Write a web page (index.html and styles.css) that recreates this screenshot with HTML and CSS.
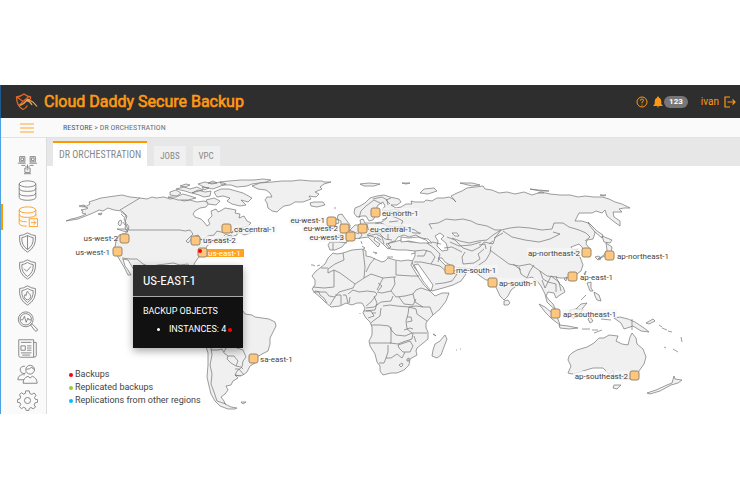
FILE: index.html
```html
<!DOCTYPE html>
<html lang="en">
<head>
<meta charset="utf-8">
<title>Cloud Daddy Secure Backup</title>
<link rel="stylesheet" href="styles.css">
</head>
<body>
<div class="app">
  <header class="topbar">
    <svg class="logo" viewBox="0 0 24 20" aria-hidden="true"><path d="M15.500 7V4.800Q12 4.500 9 2Q6 4.500 1.500 4.800Q1.500 14 8 17.500Q10.500 16.500 12.500 13.500M2 5L8 9.500L14 4.500M4 13.500L8 9.500"/><path class="swoosh" d="M5 13.500Q9 12 11.500 8.500Q13 6.500 15.500 8.500Q19 10 22 14.500M11.500 8.500Q15 9 17 13"/></svg>
    <h1 class="brand">Cloud Daddy Secure Backup</h1>
    <button class="icon-button" aria-label="Help"><svg class="help" viewBox="0 0 12 12"><circle cx="6" cy="6" r="5"/><path d="M4.300 4.700Q4.500 3 6 3Q7.800 3.200 7.500 4.800Q7.300 5.500 6 6.200V7.300M6 8.500V9.500"/></svg></button>
    <button class="alerts" aria-label="Notifications"><svg class="bell" viewBox="0 0 12 12"><path d="M6 0.500Q7 .5 7 1.800Q9.300 2.500 9.300 5.500V8L10.800 9.700V10H1.200V9.700L2.700 8V5.500Q2.700 2.500 5 1.800Q5 .5 6 .5M4.800 10.500H7.200Q6 12.500 4.800 10.500"/></svg><span class="count">123</span></button>
    <a class="user" href="#">ivan <svg class="exit" viewBox="0 0 12 12"><path d="M6 1H1V11H6M3.500 6H11M8.500 3.500L11 6L8.500 8.500"/></svg></a>
  </header>

  <div class="crumbs">
    <button class="menu" aria-label="Menu"><svg viewBox="0 0 14 10"><path d="M0 1.500H14M0 5.500H14M0 9.500H14"/></svg></button>
    <nav class="trail"><a href="#">RESTORE</a> &gt; DR ORCHESTRATION</nav>
  </div>

  <div class="workspace">
    <nav class="sidebar">
      <a href="#" aria-label="Network"><svg viewBox="0 0 24 24"><path d="M3 3H9V9H3ZM4.500 4.500H7.500V7.500H4.500ZM1 10.500H10M15 3H21V9H15ZM16.500 4.500H19.500V7.500H16.500ZM14 10.500H23M5 13H9L11 15M19 13H15L13 15M9 16H15V21H9ZM11 18H13M8 22.500H16M12 12V16"/></svg></a>
      <a href="#" aria-label="Storage"><svg viewBox="0 0 24 24"><ellipse cx="12" cy="4.500" rx="9.500" ry="3.500"/><path d="M2.500 4.500V20Q3 23 12 23.200Q21 23 21.500 20V4.500M2.500 9.500Q3 13 12 13Q21 13 21.500 9.500M2.500 15Q3 18.200 12 18.200Q21 18.200 21.500 15"/></svg></a>
      <a class="current" href="#" aria-label="Restore"><svg viewBox="0 0 24 24"><ellipse cx="12" cy="4.500" rx="9.500" ry="3.500"/><path d="M2.500 4.500V20Q3 23 11 23M21.500 4.500V12M2.500 9.500Q3 13 12 13Q21 13 21.500 9.500M2.500 15Q3 18 11 18M14 14.500H23.500V23.500H14ZM16 19H21.500M19 16.500L21.500 19L19 21.500"/></svg></a>
      <a href="#" aria-label="Protection"><svg viewBox="0 0 24 24"><path d="M12 1Q7 4 3 4Q1.500 17 12 23Q22.500 17 21 4Q17 4 12 1ZM12 4Q8.500 6 5.500 6.500Q5 15.500 12 20Q19 15.500 18.500 6.500Q15.500 6 12 4ZM12 4V20"/></svg></a>
      <a href="#" aria-label="Compliance"><svg viewBox="0 0 24 24"><path d="M12 1Q7 4 3 4Q1.500 17 12 23Q22.500 17 21 4Q17 4 12 1ZM12 4Q8.500 6 5.500 6.500Q5 15.500 12 20Q19 15.500 18.500 6.500Q15.500 6 12 4ZM8 11L11 14L16 8.500"/></svg></a>
      <a href="#" aria-label="Firewall"><svg viewBox="0 0 24 24"><path d="M12 1Q7 4 3 4Q1.500 17 12 23Q22.500 17 21 4Q17 4 12 1ZM12 4Q8.500 6 5.500 6.500Q5 15.500 12 20Q19 15.500 18.500 6.500Q15.500 6 12 4ZM12 7Q12.500 9 15 11Q17 15.500 12 17Q7 15.500 9 11L10.500 12Q10.500 9 12 7"/></svg></a>
      <a href="#" aria-label="Monitoring"><svg viewBox="0 0 24 24"><circle cx="10" cy="9.500" r="8.500"/><circle cx="10" cy="9.500" r="6.500"/><path d="M4 10H6.500L8.500 6L10.500 13L12.500 8L13.500 10H16M15.500 16L17 14.500L23 20.500Q24 22 22.500 23Q21.500 23.500 20.500 22.500Z"/></svg></a>
      <a href="#" aria-label="Reports"><svg viewBox="0 0 24 24"><path d="M2 2H19V22H4Q2 22 2 20ZM19 5H22V20Q22 22 19 22M4.500 5H16.500M4.500 9H9.500V14H4.500ZM11.500 9H16.500M11.500 11.500H16.500M11.500 14H16.500M4.500 17H16.500M6 19.500H15"/></svg></a>
      <a href="#" aria-label="Users"><svg viewBox="0 0 24 24"><circle cx="15" cy="6.500" r="5"/><path d="M10.500 6Q15 6 17 3.500Q17.500 6 20 6M7 22Q7 16 12.500 14L15 16L17.500 14Q23 16 23 22ZM9 2.500Q4 2 3.500 7Q4.500 11 8 11L10 10M8 11V13M6.500 12Q1 13 1 18H8"/></svg></a>
      <a href="#" aria-label="Settings"><svg viewBox="0 0 24 24"><circle cx="12" cy="12" r="3.500"/><path d="M10 1H14L14.700 4L17 5L19.600 3.400L21.800 6L20 8.700L20.800 10.500L23.500 11V14L20.500 14.800L19.600 17L21.200 19.500L18.500 21.500L16 20L14 21L13.500 23.500H10.500L9.700 20.700L7.500 19.800L5 21.300L2.800 19L4.300 16.500L3.400 14.500L.5 14V11L3.400 10L4.300 8L2.800 5.500L5 3.200L7.500 4.700L9.500 4Z"/></svg></a>
    </nav>

    <main class="content">
      <nav class="tabs">
        <a class="tab active" href="#">DR ORCHESTRATION</a>
        <a class="tab" href="#">JOBS</a>
        <a class="tab" href="#">VPC</a>
      </nav>
      <section class="map">
        <svg class="world" viewBox="47 166 693 248" role="img" aria-label="Regions">
          <g class="land">
            <!-- North America -->
            <path d="M66 221L71 219L76 218L82 216L86 214L82 213L83 211L81 210L86 209L88 208L85 207L82 206L87 206L90 204L89 202L95 200L101 198L108 197L115 196L122 195L130 197L140 198L147 199L152 197L156 198L164 197L170 199L176 198L184 201L190 200L197 202L204 201L209 203L206 207L200 208L195 211L193 214L195 217L201 219L204 222L207 226L210 224L208 220L212 216L211 211L216 209L218 212L222 210L225 208L231 209L236 210L235 213L240 214L239 218L244 216L247 221L251 223L248 226L243 227L235 229L231 233L238 231L237 235L231 237L226 234L222 238L216 239L211 243L207 246L205 250L203 254L198 258L194 264L196 271L192 270L188 264L180 265L173 263L166 264L157 265L151 269L149 276L151 283L158 286L167 287L170 282L178 281L176 290L184 293L187 302L196 307L191 310L183 305L173 295L162 294L147 287L140 278L134 270L128 260L123 259L125 266L128 270L131 275L128 275L124 267L121 262L118 257L115 252L115 247L116 241L119 235L124 234L128 231L125 228L126 223L124 219L126 215L122 211L114 210L108 208L103 211L99 210L93 213L88 215L78 219Z"/>
            <path d="M119 221l2 -1 1 3 -2 3 -2 -2zM83 207l-4 -1 5 -1 1 1zM98 214l4 -1 -1 2zM117 229l8 0 3 3 -5 -1zM236 233l5 -5 6 2 4 3 -7 2 -3 -2zM225 237l6 -2 1 2 -7 2z"/>
            <path d="M170 192L176 190L181 193L177 196L170 195ZM168 197L176 197L183 194L190 196L196 198L188 200L178 200ZM176 189L184 187L190 189L197 187L203 190L195 192L191 193L185 191ZM192 193L198 190L205 192L211 191L210 196L204 197L199 195ZM198 184L205 182L212 184L220 182L226 184L218 187L213 189L204 187ZM220 182L229 181L241 180L254 180L263 179L271 180L266 182L252 184L247 186L237 187L231 185L222 185ZM214 192L221 189L229 189L236 191L243 193L252 198L248 202L241 200L246 205L240 206L232 204L227 201L230 198L223 196L217 197ZM206 200L214 198L220 201L216 205L208 204ZM180 186l6 -2 4 1 -5 2zM202 187l7 1 -5 2zM208 183l5 -2 4 2z"/>
            <!-- Greenland and Iceland -->
            <path d="M252 186L260 183L272 182L282 181L292 181L300 180L311 181L322 181L324 182L331 182L324 184L320 187L322 189L315 192L319 194L316 197L309 196L311 199L303 202L295 202L290 205L284 206L280 209L277 212L272 211L268 208L267 203L265 200L267 197L272 197L270 193L266 190L258 189ZM310 203L314 202L323 202L325 205L317 207L311 206Z"/>
            <!-- South America -->
            <path d="M193 309L203 305L215 307L225 307L235 309L243 311L245 314L252 315L255 317L262 318L269 319L275 322L276 326L273 332L270 338L270 344L268 351L262 354L257 357L255 363L250 366L247 372L243 375L239 376L235 375L238 378L233 381L231 385L226 386L228 390L225 394L221 397L224 401L225 404L231 407L237 408L235 409L228 409L220 406L215 401L211 394L209 386L207 377L208 365L208 353L206 347L198 340L190 327L188 319ZM241 402l5 0 -3 2z"/>
            <path class="border" d="M211 348L212 355L210 365L212 374L211 384L214 392L217 401L226 404M211 350L218 350L222 349L224 353L228 356L234 356L238 361L236 366L241 367L243 369M224 352L226 348L231 345L237 348L243 350L246 357L243 361L242 367L237 371L235 375L241 376M228 356L227 359L231 363L236 366M235 369L239 369L244 375"/>
            <!-- Africa -->
            <path d="M333 253L337 254L343 253L352 250L363 249L366 251L366 256L371 257L375 259L382 262L385 261L388 258L395 260L401 261L408 260L413 261L411 265L414 270L419 278L424 285L430 291L433 294L435 296L442 293L449 293L446 301L440 309L433 315L429 319L426 323L426 328L428 332L428 339L422 344L417 348L416 351L417 355L410 359L409 365L404 370L397 373L391 373L383 375L380 371L380 366L377 362L375 354L370 346L369 341L372 335L372 327L370 322L366 318L363 313L365 308L362 303L357 303L352 305L346 303L340 306L331 307L325 302L320 297L315 293L312 289L315 285L315 280L312 276L316 271L320 268L325 264L328 258ZM433 350L435 344L440 341L445 335L447 339L444 347L441 355L437 358L432 356ZM433 334l2 1 1 1zM456 350l1 0M460 349l1 0M311 265l2 0 2 1M317 266l3 -1M360 313l0 1"/>
            <path class="border" d="M343 253L344 260L335 264L328 269L328 273L334 270L334 287L324 288L313 287M321 268L328 268M334 270L340 273L347 278L355 284L364 278L365 267L363 250M355 284L353 288L346 290L339 292L335 297L329 296L326 292L321 292L315 291M335 297L330 305M335 295L341 295L341 305M343 295L346 295L348 303M348 294L353 290L359 292L367 291L375 292L377 294L371 302L366 306M349 303L350 297M364 278L371 274L383 278L377 290M375 258L370 264L366 272M383 278L394 277L395 284L391 291L382 293L377 292M396 261L396 275L412 276L419 276M396 277L394 277M391 291L396 297L405 296L413 294L416 290L421 288L430 291M413 294L415 302L423 307L430 307L433 315M393 296L391 301L381 302L374 307L366 308M374 296L377 303L375 310L364 311M383 306L390 305L397 306L409 307L416 306L423 307M381 308L380 316L373 321L371 323M409 307L408 314L406 321L407 329L412 333L405 336L396 335L392 331L389 326L380 325L371 325M409 307L416 309L417 314L427 321M407 317L411 317L412 321L407 322M412 333L427 333M391 327L391 337L391 343L370 343M390 343L398 344L403 342L412 339L413 333M404 330L410 328L413 329M398 345L410 341L413 346L410 352L403 352L399 348ZM388 345L388 352L386 358L391 358L397 354L402 358L405 352M386 358L384 363L379 363M407 359L409 358L409 361L407 361ZM399 365l3 -2 1 2 -2 2zM366 311L371 311L374 316L368 318M372 313L376 313M313 292L319 292L320 295L324 298L327 303M414 336L416 342M399 297L404 304L413 305L416 299M378 291L382 286L378 283"/>
            <!-- Europe and Asia -->
            <path d="M355 208L360 206L365 203L370 198L377 196L384 195L390 197L399 199L401 202L397 205L391 205L396 208L401 207L406 204L412 204L411 201L415 202L424 202L426 200L432 201L437 198L444 198L449 197L453 199L456 202L451 196L457 193L462 191L467 188L475 187L483 186L485 189L492 190L499 193L507 192L515 194L524 192L532 195L541 192L550 194L560 195L570 195L578 197L585 196L594 197L602 197L609 199L615 202L622 204L630 208L624 208L619 209L622 212L613 212L614 217L620 221L620 226L613 221L607 216L605 210L602 213L596 211L592 213L579 213L575 221L582 221L588 223L593 227L595 233L593 239L587 240L586 244L590 249L589 254L584 254L582 247L579 244L571 247L573 250L578 249L574 253L580 257L583 265L581 271L574 276L566 278L560 278L556 277L559 283L563 287L565 292L560 295L556 298L554 293L548 292L546 296L549 300L553 304L556 310L551 306L547 302L545 294L541 286L537 281L532 277L526 279L519 284L511 290L508 296L504 300L500 296L495 285L492 280L486 280L480 276L472 269L464 268L455 267L450 265L445 262L442 258L438 258L445 265L449 268L454 271L460 269L466 274L461 281L453 285L443 288L432 291L427 284L421 276L414 267L412 262L415 256L415 251L406 250L398 250L390 249L386 244L394 242L401 240L410 242L420 242L432 243L428 239L421 238L416 235L409 237L404 235L398 237L395 241L391 242L388 244L391 247L388 249L383 244L375 237L374 240L380 244L378 247L374 243L368 237L361 238L352 239L346 242L342 247L335 250L330 250L328 245L330 242L339 242L342 239L338 235L343 232L350 230L355 225L361 225L360 220L363 219L365 223L373 223L382 222L387 218L385 214L390 212L400 211L395 209L387 211L382 210L385 206L383 202L378 205L375 211L376 215L373 220L369 221L366 216L362 216L357 217L354 213Z"/>
            <path d="M341 229L344 226L341 225L341 221L337 219L338 215L342 214L344 217L347 221L350 225L350 228L345 229ZM332 225L333 220L338 219L339 223ZM504 301l4 -1 2 3 -2 2 -4 0zM588 222L592 226L597 231L603 235L602 238L595 232L590 226ZM602 236L612 240L610 243L604 242ZM606 243L612 247L611 253L605 256L598 259L604 255L607 250ZM595 257l4 -1 2 3 -3 1zM584 274l2 -3 -1 4zM587 283l4 -1 0 6 2 3 -3 0zM594 292l5 3 2 6 -4 -1 -2 -4zM586 295l-5 5M564 279l3 -2 -1 4zM387 257l6 0M411 254l4 -1M362 246l3 2 -3 2M361 241l1 3M373 252l4 1 -2 1M334 208l2 0"/>
            <path d="M360 184L369 183L380 184L374 186L364 186ZM420 193L424 189L434 188L437 191L428 194ZM402 183l8 0 -4 1zM460 183L472 183L480 185L472 186ZM530 189l9 1 10 1 -9 0zM538 193l6 0M600 195l6 0 -2 1z"/>
            <!-- Inland waters -->
            <path class="water" d="M435 236L440 233L444 236L441 239L446 243L448 250L442 251L437 246L438 241ZM401 237L409 238L418 237L426 240L429 243L419 243L409 241L401 242ZM414 265L418 264L426 275L433 285L431 291L423 281ZM452 233l5 0 2 3 -4 0z"/>
            <path class="border" d="M391 198L386 200L390 204M382 204L374 200L366 206L361 211L359 218M373 199L382 197L387 200L388 205M361 225L359 231L362 235L359 239M349 230L354 232L359 234M367 224L368 229L372 232L367 235L374 237M375 224L380 223L389 226L386 232L379 233L372 232M389 215L397 218L403 221L400 227L389 226M389 222L398 221M387 232L394 230L405 230L414 233L421 233M380 234L385 239L392 240M368 236L376 234L382 237L384 244M388 234L388 240M377 237L381 240M333 243L333 250M339 242L347 243M432 229L429 224L438 223L446 219L455 220L463 219L471 221L477 224L487 226L495 230L501 230L493 235L487 240L478 241L469 243L460 241L452 238M447 237L455 240L463 248L472 251L480 247L484 242L493 244L495 238L501 230L510 228L518 227L530 228L542 230L552 229L554 223L563 223L569 227L579 230L586 233L590 237L585 241M503 231L512 237L525 240L539 242L550 239L560 234L553 232M484 249L478 254L480 259L474 263L463 264L462 257L465 252M491 246L490 253L486 260L479 265L474 268M490 250L498 256L509 264L519 266L530 264L540 271L547 276L557 277M519 267L521 274L527 278L530 271L534 265M540 271L543 279L548 282L551 276L559 282L561 291M542 280L545 288L548 282L556 284L556 292M427 243L434 248L440 254L438 262M415 251L424 250L431 252L435 257L431 264L421 262L414 262M431 264L440 266L447 272L457 274L452 281L444 283L435 284M417 256L424 256L427 250M444 248L452 247L462 252M432 242L441 244M450 242L459 246L471 245L481 242M479 245L485 244L486 249M493 241L489 244M494 238L503 233M513 264L521 270M398 230L402 226L415 230L420 234M387 218L382 220"/>
            <!-- Oceania -->
            <path d="M572 353L577 350L587 347L594 343L599 338L604 338L609 335L618 336L616 341L622 344L628 345L630 337L632 333L636 338L637 344L643 349L646 357L644 364L639 371L636 378L628 379L620 379L614 376L613 371L609 374L603 368L593 368L583 371L572 374L568 373L571 366L568 360L569 356ZM614 385L621 385L617 389L613 388ZM647 393L656 390L667 385L672 383L674 376L675 379L682 380L678 383L671 385L660 391L650 394Z"/>
            <path d="M539 304L545 307L551 312L558 319L560 325L552 319L545 312ZM559 325L568 326L578 328L569 329L560 328ZM582 329l8 0M592 330l6 0M594 333l8 -3M570 310L576 309L581 304L587 303L582 309L580 316L573 318L569 315ZM590 317L593 321L590 323L588 319ZM601 319l10 1M614 318L620 317L628 319L635 322L644 328L649 332L641 331L633 326L624 329L621 323ZM646 323l7 -4 2 2 -6 3zM659 325l3 2M662 328l5 2M668 331l4 1M673 349l5 3M681 337l1 5M664 347l2 1"/>
            <path class="border" d="M120 210L140 198M121 212L127 216L125 222L128 230H180L185 231L190 230L193 234L190 237L186 241L188 243L193 237L198 235L201 240L208 236L214 235L217 231L225 233M122 258L130 259L137 259L143 264L150 267M632 319L632 330M576 309L584 310M125 225L123 222M124 217L121 214M127 224L129 227L128 230M198 240L205 239"/>
          </g>
          <g class="plates">
            <rect x="369" y="224" width="43" height="9"/><rect x="381" y="208" width="38" height="9"/><rect x="455" y="265" width="43" height="9"/><rect x="498" y="278" width="40" height="9"/><rect x="562" y="309" width="55" height="9"/><rect x="573" y="371" width="56" height="9"/><rect x="527" y="248" width="54" height="9"/><rect x="289" y="217" width="37" height="9"/><rect x="302" y="224" width="37" height="9"/><rect x="308" y="233" width="37" height="9"/><rect x="233" y="225" width="44" height="9"/><rect x="202" y="236" width="35" height="9"/>
            <rect class="selected" x="206" y="249" width="38" height="8"/>
          </g>
          <g class="pins">
            <rect x="120" y="234" width="9" height="9" rx="2"/><rect x="113" y="247" width="9" height="9" rx="2"/><rect x="191" y="236" width="9" height="9" rx="2"/><rect x="198" y="248" width="9" height="9" rx="2"/><rect x="222" y="224" width="9" height="9" rx="2"/><rect x="249" y="354" width="9" height="9" rx="2"/><rect x="327" y="217" width="9" height="9" rx="2"/><rect x="340" y="224" width="9" height="9" rx="2"/><rect x="346" y="232" width="9" height="9" rx="2"/><rect x="358" y="224" width="9" height="9" rx="2"/><rect x="371" y="208" width="9" height="9" rx="2"/><rect x="445" y="265" width="9" height="9" rx="2"/><rect x="488" y="278" width="9" height="9" rx="2"/><rect x="582" y="248" width="9" height="9" rx="2"/><rect x="605" y="251" width="9" height="9" rx="2"/><rect x="568" y="272" width="9" height="9" rx="2"/><rect x="551" y="309" width="9" height="9" rx="2"/><rect x="630" y="371" width="9" height="9" rx="2"/>
          </g>
          <circle class="alert" cx="200" cy="251" r="2"/>
          <g class="labels">
            <text class="before" x="118" y="241">us-west-2</text><text class="before" x="110" y="255">us-west-1</text><text x="203" y="243">us-east-2</text><text class="chosen" x="208" y="256">us-east-1</text><text x="234" y="232">ca-central-1</text><text x="260" y="362">sa-east-1</text><text class="before" x="325" y="223">eu-west-1</text><text class="before" x="338" y="231">eu-west-2</text><text class="before" x="344" y="240">eu-west-3</text><text x="370" y="232">eu-central-1</text><text x="382" y="216">eu-north-1</text><text x="456" y="273">me-south-1</text><text x="499" y="286">ap-south-1</text><text class="before" x="580" y="256">ap-northeast-2</text><text x="617" y="259">ap-northeast-1</text><text x="580" y="280">ap-east-1</text><text x="563" y="317">ap-southeast-1</text><text class="before" x="628" y="379">ap-southeast-2</text>
          </g>
        </svg>
        <ul class="legend">
          <li class="backups">Backups</li>
          <li class="replicated">Replicated backups</li>
          <li class="other">Replications from other regions</li>
        </ul>
        <aside class="tooltip">
          <h2>US-EAST-1</h2>
          <div class="details">
            <h3>BACKUP OBJECTS</h3>
            <ul><li>INSTANCES: 4<span class="dot"></span></li></ul>
          </div>
        </aside>
      </section>
    </main>
  </div>
</div>
</body>
</html>
```
FILE: styles.css
```css
* { box-sizing: border-box; }
body {
  margin: 0;
  padding-top: 85px;
  background: #fff;
  color: #555;
  font-family: Roboto, "Liberation Sans", sans-serif;
}
a { color: inherit; text-decoration: none; }
button { padding: 0; border: 0; background: none; font: inherit; color: inherit; }
svg { display: block; fill: none; stroke: currentColor; }

.app { border-left: 1px solid #4ba3e3; }

.topbar {
  display: flex;
  align-items: center;
  height: 33px;
  padding: 0 4px 0 14px;
  background: #2e2e2e;
  color: #ff9914;
  border-left: 1px solid #205b90;
  margin-left: -1px;
}
.logo { width: 24px; height: 20px; margin-right: 5px; color: #e06a25; stroke-width: 1.3; }
.logo .swoosh { stroke: #e8a45c; }
.brand { margin: 0 auto 0 0; font-size: 16px; line-height: 20px; font-weight: 400; -webkit-text-stroke: 0.6px; }
.help { width: 12px; height: 12px; margin-right: 4px; }
.alerts { display: flex; align-items: center; }
.bell { width: 12px; height: 12px; fill: currentColor; stroke: none; }
.count { padding: 0 5px; border-radius: 6px; background: #777; color: #fff; font-size: 8px; line-height: 12px; font-weight: 700; }
.user { display: flex; align-items: center; gap: 5px; margin-left: 13px; font-size: 10px; }
.exit { width: 12px; height: 12px; stroke-width: 1.2; }

.crumbs { display: flex; align-items: center; height: 20px; border-bottom: 1px solid #e2e2e2; background: #fafafa; }
.menu { margin: 0 29px 0 19px; color: #ffa733; }
.menu svg { width: 14px; height: 11px; }
.trail, .tabs { font-family: "Roboto Condensed", "Liberation Sans Narrow", Roboto, sans-serif; }
.trail { font-size: 8px; line-height: 18px; color: #6c7378; }
.trail a { color: #4c6078; }

.workspace { display: grid; grid-template-columns: 46px minmax(0, 1fr); }
.sidebar { display: flex; flex-direction: column; justify-content: space-between; padding-top: 13px; border-right: 1px solid #dcdcdc; background: #fafafa; color: #7c7c7c; }
.sidebar a { display: flex; align-items: center; justify-content: center; height: 26px; padding-left: 7px; }
.sidebar svg { width: 21px; height: 21px; }
.sidebar .current { color: #ff9914; border-left: 2px solid #ff9800; padding-left: 5px; }

.content { min-width: 0; }
.tabs { display: flex; align-items: flex-end; gap: 7px; height: 28px; padding-left: 6px; background: #e7e7e7; }
.tab { padding: 0 6px; background: #f0f0f0; color: #888; font-size: 9px; line-height: 20px; }
.tab.active { border-top: 2px solid #ff9800; background: #fff; font-size: 10px; line-height: 23px; }

.map { position: relative; }
.world { width: 100%; height: auto; }
.land path { fill: #f0f0f0; stroke: #747474; stroke-width: 0.7; stroke-linejoin: round; }
.land .border { fill: none; }
.land .water { fill: #fff; }
.plates rect { fill: #f7f7f7; fill-opacity: 0.75; stroke: none; }
.plates .selected { fill: #ffa31f; fill-opacity: 1; }
.pins rect { fill: #ffc77d; stroke: #97866e; stroke-width: 1; }
.alert { fill: #f00; stroke: none; }
.labels text { fill: #444; stroke: none; font-size: 8px; }
.labels .before { text-anchor: end; }
.labels .chosen { fill: #fff; }

.legend { position: absolute; left: 22px; bottom: 7px; margin: 0; padding: 0; list-style: none; color: #444; font-size: 9px; line-height: 13px; }
.legend li { display: flex; align-items: center; gap: 2px; }
.legend li::before, .dot { content: ""; width: 4px; height: 4px; border-radius: 50%; background: #f00; }
.legend .replicated::before { background: #9acd32; }
.legend .other::before { background: #00bfff; }

.tooltip { position: absolute; left: 12.4%; top: 40%; width: 110px; background: #111; color: #fff; box-shadow: 0 3px 8px rgba(0, 0, 0, 0.35); }
.tooltip h2 { margin: 0; padding: 0 10px; border-bottom: 1px solid #aaa; background: #2e2e2e; font-family: "Roboto Condensed", "Liberation Sans Narrow", Roboto, sans-serif; font-size: 13px; line-height: 31px; font-weight: 400; }
.details { padding: 5px 10px; }
.details h3 { margin: 0; font-size: 9px; line-height: 18px; font-weight: 400; }
.details ul { margin: 0; padding: 0 0 5px 26px; font-size: 9px; line-height: 18px; }
.dot { display: inline-block; margin-left: 2px; }
```
